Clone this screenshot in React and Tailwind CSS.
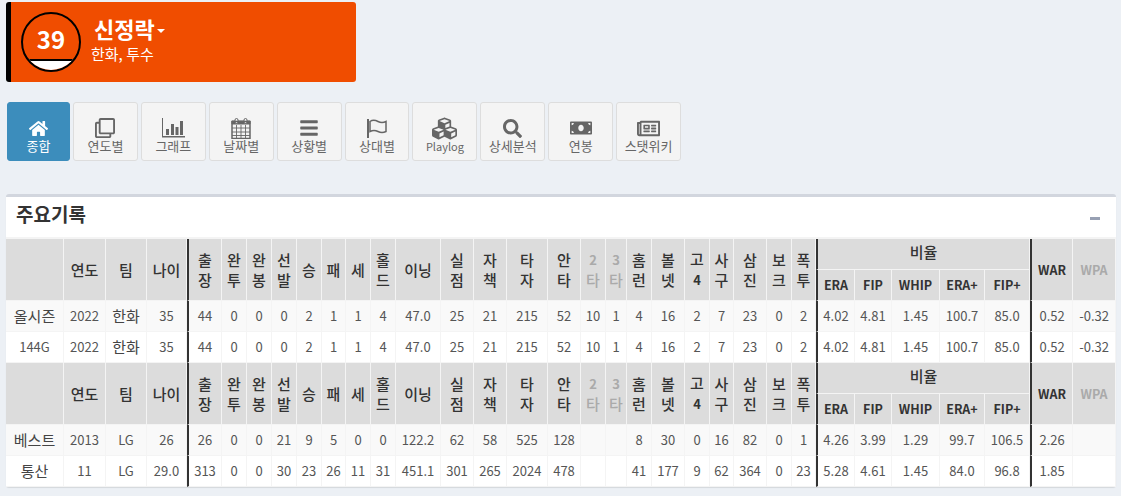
import React from "react";
import {
  FaHome,
  FaRegClone,
  FaBars,
  FaCubes,
  FaSearch,
  FaMoneyBill,
  FaRegNewspaper,
} from "react-icons/fa";

function ChartIcon() {
  return (
    <svg width="24" height="20" viewBox="0 0 24 20" fill="#666">
      <path d="M1 0h1v18h22v1.5H1z" />
      <rect x="5" y="11" width="3" height="6" />
      <rect x="10" y="6" width="3" height="11" />
      <rect x="14.5" y="9" width="3" height="8" />
      <rect x="19" y="3" width="3" height="14" />
    </svg>
  );
}

function CalendarIcon() {
  return (
    <svg width="20" height="21" viewBox="0 0 20 21" fill="none" stroke="#666">
      <path d="M1 3h18v3H1z" fill="#666" />
      <rect x="4" y="0.5" width="3" height="5" rx="1.5" fill="#f4f4f4" />
      <rect x="13" y="0.5" width="3" height="5" rx="1.5" fill="#f4f4f4" />
      <rect x="1" y="3.5" width="18" height="17" strokeWidth="1.5" />
      <path d="M1 10h18M1 14h18M1 17.5h18M5.5 7v13M10 7v13M14.5 7v13" strokeWidth="0.9" />
    </svg>
  );
}

function FlagIcon() {
  return (
    <svg width="22" height="20" viewBox="0 0 22 20" fill="none" stroke="#666">
      <path d="M2 1v19" strokeWidth="2" />
      <path d="M4 3.5c3-2 6-1 8 0s5 1.5 8 0v10c-3 1.5-6 1-8 0s-5-1.5-8 0z" strokeWidth="1.5" />
    </svg>
  );
}

const tabs = [
  { label: "종합", icon: <FaHome size={19} /> },
  { label: "연도별", icon: <FaRegClone size={20} /> },
  { label: "그래프", icon: <ChartIcon /> },
  { label: "날짜별", icon: <CalendarIcon /> },
  { label: "상황별", icon: <FaBars size={20} /> },
  { label: "상대별", icon: <FlagIcon /> },
  { label: "Playlog", icon: <FaCubes size={25} /> },
  { label: "상세분석", icon: <FaSearch size={19} /> },
  { label: "연봉", icon: <FaMoneyBill size={22} /> },
  { label: "스탯위키", icon: <FaRegNewspaper size={23} /> },
];

const colWidths = [58, 42, 41, 40, 35, 25, 25, 25, 25, 24, 25, 25, 45, 33, 33, 41, 33, 25, 21, 25, 33, 25, 24, 33, 25, 24, 39, 37, 48, 45, 45, 43, 43];

const heads = ["출\n장", "완\n투", "완\n봉", "선\n발", "승", "패", "세", "홀\n드", "이닝", "실\n점", "자\n책", "타\n자", "안\n타"];
const heads2 = ["홈\n런", "볼\n넷"];
const heads3 = ["사\n구", "삼\n진", "보\n크", "폭\n투"];

const thBase = "border-r border-b border-[#f4f4f4] bg-[#dcdcdc] text-center align-middle font-medium text-[15px] leading-[20px] text-[#333] whitespace-pre-line p-0";
const tdBase = "border-r border-b border-[#f4f4f4] text-center align-middle text-[13px] text-[#555] p-0 whitespace-nowrap";
const thick = "border-l-2 border-l-[#333]";

function HeaderRows() {
  return (
    <>
      <tr className="h-[31px]">
        <th rowSpan={2} className={thBase}></th>
        <th rowSpan={2} className={thBase}>연도</th>
        <th rowSpan={2} className={thBase}>팀</th>
        <th rowSpan={2} className={thBase}>나이</th>
        {heads.map((h, i) => (
          <th key={i} rowSpan={2} className={`${thBase} ${i === 0 ? thick : ""}`}>{h}</th>
        ))}
        <th rowSpan={2} className={`${thBase} !text-[#aaa]`}><b className="text-[13px]">2</b>{"\n"}타</th>
        <th rowSpan={2} className={`${thBase} !text-[#aaa]`}><b className="text-[13px]">3</b>{"\n"}타</th>
        {heads2.map((h) => (
          <th key={h} rowSpan={2} className={thBase}>{h}</th>
        ))}
        <th rowSpan={2} className={thBase}>고{"\n"}<b className="text-[13px]">4</b></th>
        {heads3.map((h) => (
          <th key={h} rowSpan={2} className={thBase}>{h}</th>
        ))}
        <th colSpan={5} className={`${thBase} ${thick} !align-top pt-[3px]`}>비율</th>
        <th rowSpan={2} className={`${thBase} ${thick} !font-bold !text-[12.5px]`}>WAR</th>
        <th rowSpan={2} className={`${thBase} !font-bold !text-[12.5px] !text-[#aaa]`}>WPA</th>
      </tr>
      <tr className="h-[31px]">
        {["ERA", "FIP", "WHIP", "ERA+", "FIP+"].map((h, i) => (
          <th key={h} className={`${thBase} !font-bold !text-[12.5px] ${i === 0 ? thick : ""}`}>{h}</th>
        ))}
      </tr>
    </>
  );
}

function DataRow({ cells, striped }) {
  return (
    <tr className={`h-[31px] ${striped ? "bg-[#f9f9f9]" : "bg-white"}`}>
      {cells.map((c, i) => (
        <td
          key={i}
          className={`${tdBase} ${i === 4 || i === 26 || i === 31 ? thick : ""} ${/[가-힣]/.test(c) ? "!text-[15px] !text-[#444]" : ""}`}
        >
          {c}
        </td>
      ))}
    </tr>
  );
}

const season = [2022, "한화", 35, 44, 0, 0, 0, 2, 1, 1, 4, "47.0", 25, 21, 215, 52, 10, 1, 4, 16, 2, 7, 23, 0, 2, "4.02", "4.81", "1.45", "100.7", "85.0", "0.52", "-0.32"];

export default function App() {
  return (
    <div className="h-[496px] overflow-hidden bg-[#ecf0f5] px-[6px] pt-[2px] font-['Noto_Sans_CJK_KR','Noto_Sans',sans-serif]">
      {/* Player */}
      <div className="flex h-[80px] w-[350px] items-center rounded-[3px] border-l-[5px] border-black bg-[#f04d00] pl-[10px] text-white">
        <div className="flex h-[60px] w-[60px] flex-col overflow-hidden rounded-full border-2 border-black">
          <div className="flex flex-1 items-center justify-center pt-[4px] text-[24px] font-bold leading-none">39</div>
          <div className="h-[11px] border-t-2 border-black bg-white"></div>
        </div>
        <div className="ml-[10px] mt-[-5px]">
          <div className="flex items-center pl-[3px] text-[22px] font-bold leading-[26px]">
            신정락
            <span className="ml-[2px] mt-[5px] h-0 w-0 border-x-[4px] border-t-[4px] border-x-transparent border-t-white"></span>
          </div>
          <div className="mt-[3px] text-[15px] leading-[20px]">한화, 투수</div>
        </div>
      </div>

      {/* Tabs */}
      <div className="mt-[20px] flex pl-px">
        {tabs.map((t, i) => (
          <div
            key={t.label}
            className={`mr-[3px] flex h-[59px] flex-col items-center rounded-[3px] border pt-[14px] ${
              t.label === "Playlog" ? "text-[11px]" : "text-[13px]"
            } ${
              i === 0
                ? "w-[63px] border-[#3c8dbc] bg-[#3c8dbc] text-white"
                : "w-[64.9px] border-[#ddd] bg-[#f4f4f4] text-[#666]"
            }`}
          >
            <div className="flex h-[22px] items-center">{t.icon}</div>
            <div className="mt-[-2px] leading-[18px]">{t.label}</div>
          </div>
        ))}
      </div>

      {/* Card */}
      <div className="mt-[33px] w-[1110px] rounded-[3px] border-t-[3px] border-[#d2d6de] bg-white shadow-[0_1px_1px_rgba(0,0,0,0.1)]">
        <div className="flex h-[40px] items-center justify-between pb-[8px] pl-[10px] pr-[16px]">
          <h3 className="text-[19px] font-bold leading-none text-[#333]">주요기록</h3>
          <span className="mt-[10px] h-[3px] w-[10px] bg-[#97a0b3]"></span>
        </div>
        <table className="w-[1110px] table-fixed border-separate border-spacing-0 border-t-2 border-[#f4f4f4]">
          <colgroup>
            {colWidths.map((w, i) => (
              <col key={i} style={{ width: w }} />
            ))}
          </colgroup>
          <tbody>
            <HeaderRows />
            <DataRow striped cells={["올시즌", ...season]} />
            <DataRow cells={["144G", ...season]} />
            <HeaderRows />
            <DataRow striped cells={["베스트", 2013, "LG", 26, 26, 0, 0, 21, 9, 5, 0, 0, "122.2", 62, 58, 525, 128, "", "", 8, 30, 0, 16, 82, 0, 1, "4.26", "3.99", "1.29", "99.7", "106.5", "2.26", ""]} />
            <DataRow cells={["통산", 11, "LG", "29.0", 313, 0, 0, 30, 23, 26, 11, 31, "451.1", 301, 265, 2024, 478, "", "", 41, 177, 9, 62, 364, 0, 23, "5.28", "4.61", "1.45", "84.0", "96.8", "1.85", ""]} />
          </tbody>
        </table>
      </div>
    </div>
  );
}
